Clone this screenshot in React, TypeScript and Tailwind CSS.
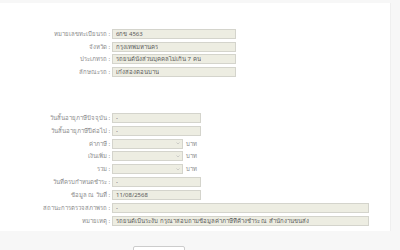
const top = [
  { label: 'หมายเลขทะเบียนรถ :', value: '6กข 4563' },
  { label: 'จังหวัด :', value: 'กรุงเทพมหานคร' },
  { label: 'ประเภทรถ :', value: 'รถยนต์นั่งส่วนบุคคลไม่เกิน 7 คน' },
  { label: 'ลักษณะรถ :', value: 'เก๋งสองตอนบาน' },
];

function Field({ value, w = 'w-[124px]' }: { value: string; w?: string }) {
  return (
    <div className={`flex h-[10px] ${w} items-center border border-[#d4d4cc] bg-[#ededE2] px-[3px] text-[6px] leading-none text-[#5a5a5a]`}>
      <span className="truncate">{value}</span>
    </div>
  );
}

function Select() {
  return (
    <div className="flex items-center gap-[3px]">
      <div className="flex h-[10px] w-[71px] items-center justify-end border border-[#d4d4cc] bg-[#ededE2] pr-[2px]">
        <svg width="4" height="3" viewBox="0 0 4 3">
          <path d="M0.5 0.5 L2 2 L3.5 0.5" fill="none" stroke="#b5b5b5" strokeWidth="0.6" />
        </svg>
      </div>
      <span className="text-[6px] leading-none text-[#888]">บาท</span>
    </div>
  );
}

function Row({ label, children }: { label: string; children: React.ReactNode }) {
  return (
    <div className="flex h-[10px] items-center">
      <div className="w-[111px] shrink-0 pr-[1px] text-right text-[6px] leading-none text-[#8a8a8a]">{label}</div>
      <div className="ml-[1px]">{children}</div>
    </div>
  );
}

export default function App() {
  return (
    <div
      className="h-[250px] w-[400px] overflow-hidden bg-[#f7f7f7] pt-[3px]"
      style={{ fontFamily: 'Tahoma, "Noto Sans", "DejaVu Sans", sans-serif' }}
    >
      <div className="h-[228px] w-[391px] border-r border-[#efefef] bg-white pt-[26px]">
        <div className="flex flex-col gap-[2.6px]">
          {top.map((r) => (
            <Row key={r.label} label={r.label}>
              <Field value={r.value} />
            </Row>
          ))}
        </div>

        <div className="mt-[36px] flex flex-col gap-[2.9px]">
          <Row label="วันสิ้นอายุภาษีปัจจุบัน :">
            <Field value="-" w="w-[89px]" />
          </Row>
          <Row label="วันสิ้นอายุภาษีปีต่อไป :">
            <Field value="-" w="w-[89px]" />
          </Row>
          <Row label="ค่าภาษี :">
            <Select />
          </Row>
          <Row label="เงินเพิ่ม :">
            <Select />
          </Row>
          <Row label="รวม :">
            <Select />
          </Row>
          <Row label="วันที่ครบกำหนดชำระ :">
            <Field value="-" w="w-[89px]" />
          </Row>
          <Row label="ข้อมูล ณ วันที่ :">
            <Field value="11/08/2568" w="w-[89px]" />
          </Row>
          <Row label="สถานะการตรวจสภาพรถ :">
            <Field value="-" w="w-[257px]" />
          </Row>
          <Row label="หมายเหตุ :">
            <Field value="รถยนต์เป็นระงับ กรุณาสอบถามข้อมูลค่าภาษีที่ค้างชำระ ณ สำนักงานขนส่ง" w="w-[257px]" />
          </Row>
        </div>
      </div>

      <div className="mt-[15px] ml-[133px] h-[14px] w-[52px] rounded-[2px] border border-[#cccccc] bg-white" />
    </div>
  );
}
